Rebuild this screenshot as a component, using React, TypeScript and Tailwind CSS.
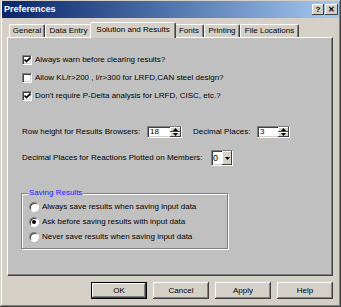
import type { ReactNode } from "react";

const raised = "shadow-[inset_-1px_-1px_#404040,inset_1px_1px_#ffffff,inset_-2px_-2px_#808080,inset_2px_2px_#d4d0c8]";
const raisedThin = "shadow-[inset_-1px_-1px_#404040,inset_1px_1px_#ffffff]";
const sunken =
  "border border-t-[#808080] border-l-[#808080] border-b-white border-r-white shadow-[inset_1px_1px_#404040,inset_-1px_-1px_#d4d0c8]";

const tabs = [
  { label: "General", width: "w-[36px]" },
  { label: "Data Entry", width: "w-[47px]" },
  { label: "Solution and Results", width: "w-[86px]", active: true },
  { label: "Fonts", width: "w-[30px]" },
  { label: "Printing", width: "w-[36px]" },
  { label: "File Locations", width: "w-[59px]" }
];

function Arrow({ down }: { down?: boolean }) {
  return (
    <svg width="5" height="3" viewBox="0 0 5 3">
      <path d={down ? "M0 0H5L2.5 3Z" : "M0 3H5L2.5 0Z"} fill="#000" />
    </svg>
  );
}

function Checkbox({ checked, children }: { checked?: boolean; children: ReactNode }) {
  return (
    <div className="flex h-[18px] items-center gap-[3px]">
      <span className={`flex h-[10px] w-[10px] shrink-0 items-center justify-center bg-white ${sunken}`}>
        {checked && (
          <svg width="7" height="6" viewBox="0 0 7 6">
            <path d="M0.5 2.5L2.5 4.5L6.5 0.5" stroke="#000" strokeWidth="1.6" fill="none" />
          </svg>
        )}
      </span>
      <span>{children}</span>
    </div>
  );
}

function Radio({ checked, children }: { checked?: boolean; children: ReactNode }) {
  return (
    <div className="flex h-[15px] items-center gap-[3px]">
      <span className="flex h-[10px] w-[10px] shrink-0 items-center justify-center rounded-full border border-t-[#808080] border-l-[#808080] border-b-white border-r-white bg-white shadow-[inset_1px_1px_#404040]">
        {checked && <span className="h-[4px] w-[4px] rounded-full bg-black" />}
      </span>
      <span>{children}</span>
    </div>
  );
}

function Spinner({ value, width }: { value: string; width: string }) {
  return (
    <div className={`flex h-[12px] ${width} bg-white ${sunken}`}>
      <span className="flex-1 pl-[2px] leading-[10px]">{value}</span>
      <div className="flex w-[11px] flex-col">
        <span className={`flex flex-1 items-center justify-center bg-[#d4d0c8] ${raisedThin}`}>
          <Arrow />
        </span>
        <span className={`flex flex-1 items-center justify-center bg-[#d4d0c8] ${raisedThin}`}>
          <Arrow down />
        </span>
      </div>
    </div>
  );
}

export default function App() {
  return (
    <div
      className={`flex h-[307px] w-[341px] flex-col bg-[#d4d0c8] p-[2px] pt-[1px] font-['Liberation_Sans',Arial,sans-serif] text-[8px] leading-none text-black shadow-[inset_-1px_-1px_#404040,inset_1px_1px_#d4d0c8,inset_-2px_-2px_#808080,inset_2px_2px_#ffffff]`}
    >
      <div className="flex h-[17px] items-center justify-between bg-gradient-to-r from-[#0a246a] to-[#a6caf0] pl-[2px] pr-[1px]">
        <span className="text-[9px] font-bold text-white">Preferences</span>
        <div className="flex gap-[1px]">
          <span className={`flex h-[11px] w-[12px] items-center justify-center bg-[#d4d0c8] text-[8px] font-bold ${raisedThin}`}>?</span>
          <span className={`flex h-[11px] w-[13px] items-center justify-center bg-[#d4d0c8] text-[8px] font-bold ${raisedThin}`}>✕</span>
        </div>
      </div>

      <div className="ml-[7px] mt-[4px] flex h-[15px] items-end">
        {tabs.map((tab) => (
          <div
            key={tab.label}
            className={`flex items-center justify-center rounded-t-[2px] border-l border-r border-t border-l-white border-r-[#404040] border-t-white bg-[#d4d0c8] shadow-[inset_-1px_0_#808080] ${tab.width} ${
              tab.active ? "relative z-10 -mx-[2px] -mb-[1px] h-[16px] pb-[1px]" : "h-[13px]"
            }`}
          >
            {tab.label}
          </div>
        ))}
      </div>

      <div className="ml-[5px] flex h-[239px] w-[326px] flex-col border border-t-white border-l-white border-r-[#404040] border-b-[#404040] bg-[#c0c0c0] pl-[14px] pt-[13px] shadow-[inset_-1px_-1px_#808080]">
        <Checkbox checked>Always warn before clearing results?</Checkbox>
        <Checkbox>Allow KL/r&gt;200 , l/r&gt;300 for LRFD,CAN steel design?</Checkbox>
        <Checkbox checked>Don't require P-Delta analysis for LRFD, CISC, etc.?</Checkbox>

        <div className="mt-[21px] flex h-[12px] items-center">
          <span className="w-[125px]">Row height for Results Browsers:</span>
          <Spinner value="18" width="w-[35px]" />
          <span className="ml-[11px] w-[64px]">Decimal Places:</span>
          <Spinner value="3" width="w-[33px]" />
        </div>

        <div className="mt-[12px] flex h-[16px] items-center">
          <span className="w-[189px]">Decimal Places for Reactions Plotted on Members:</span>
          <div className={`flex h-[16px] w-[22px] bg-white ${sunken}`}>
            <span className="flex flex-1 items-center pl-[1px] text-[9px]">0</span>
            <span className={`flex w-[10px] items-center justify-center bg-[#d4d0c8] ${raisedThin}`}>
              <Arrow down />
            </span>
          </div>
        </div>

        <div className="relative -ml-[1px] mt-[27px] h-[56px] w-[207px] border border-[#808080] pl-[7px] pt-[5px] shadow-[1px_1px_#ffffff,inset_1px_1px_#ffffff]">
          <span className="absolute -top-[5px] left-[6px] bg-[#c0c0c0] px-[1px] text-[#2020ff]">Saving Results</span>
          <Radio>Always save results when saving input data</Radio>
          <Radio checked>Ask before saving results with input data</Radio>
          <Radio>Never save results when saving input data</Radio>
        </div>
      </div>

      <div className="mt-[6px] flex justify-end gap-[6px] pr-[6px]">
        {["OK", "Cancel", "Apply", "Help"].map((label) => (
          <button
            key={label}
            className={`flex h-[17px] w-[56px] items-center justify-center bg-[#d4d0c8] text-[8px] ${
              label === "OK"
                ? "border border-black shadow-[inset_-1px_-1px_#404040,inset_1px_1px_#ffffff,inset_-2px_-2px_#808080]"
                : raised
            }`}
          >
            {label}
          </button>
        ))}
      </div>
    </div>
  );
}
